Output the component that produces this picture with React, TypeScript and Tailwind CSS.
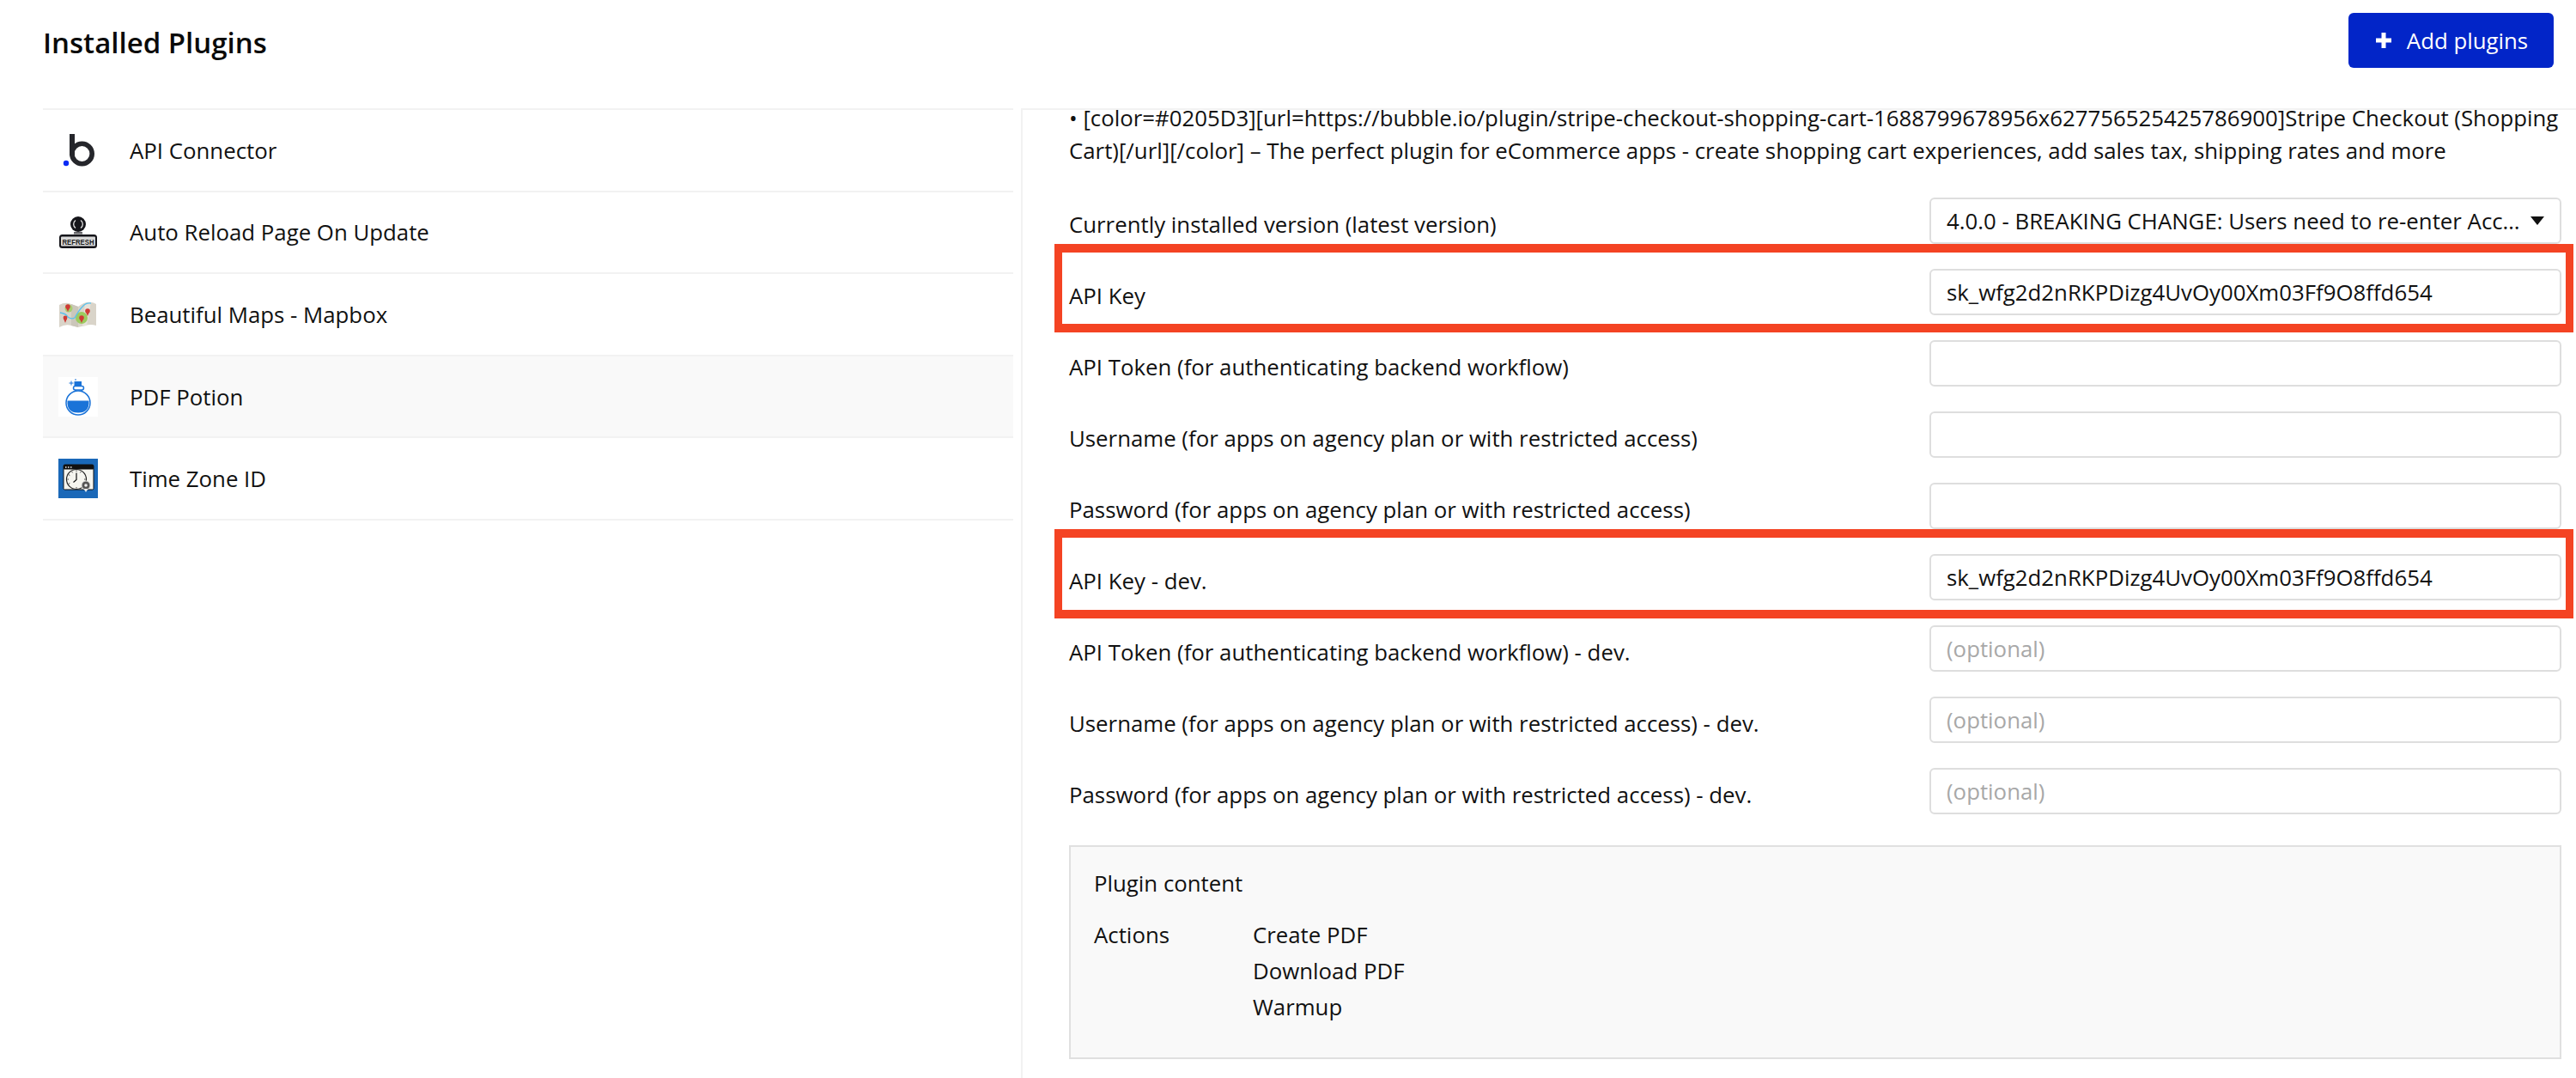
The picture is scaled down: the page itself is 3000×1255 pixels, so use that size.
import React from "react";

const font = { fontFamily: '"Open Sans", sans-serif' };

function BubbleIcon() {
  return (
    <svg viewBox="0 0 46 46" className="w-[46px] h-[46px]">
      <path d="M16 4 V29" stroke="#25262b" strokeWidth="6" fill="none" />
      <circle cx="27.5" cy="27" r="11.7" stroke="#25262b" strokeWidth="5.6" fill="none" />
      <circle cx="9" cy="38" r="3.2" fill="#0b2bf5" />
    </svg>
  );
}

function RefreshIcon() {
  return (
    <svg viewBox="0 0 46 46" className="w-[46px] h-[46px]">
      <circle cx="23" cy="14" r="9" fill="#15151a" />
      <path d="M20 9.5a5.5 5.5 0 0 0 0 9M26 9.5a5.5 5.5 0 0 1 0 9" stroke="#e5e5e5" strokeWidth="1.3" fill="none" />
      <rect x="18" y="23" width="10" height="2.5" fill="#66666a" />
      <rect x="1" y="26" width="44" height="16" rx="3.5" fill="#15151a" />
      <rect x="3" y="28.5" width="40" height="11" rx="1" fill="#d8d8d8" />
      <text x="23" y="37.5" textAnchor="middle" fontSize="9.5" fontWeight="700" fill="#1a1a1a" fontFamily="Liberation Sans, sans-serif" textLength="37" lengthAdjust="spacingAndGlyphs">REFRESH</text>
    </svg>
  );
}

function MapIcon() {
  return (
    <svg viewBox="0 0 46 46" className="w-[46px] h-[46px]">
      <path d="M1 12 Q8 8 15 11 L23 14 Q31 8 38 9 Q41 9 44 11 V36 Q38 34 31 36 L23 38 L15 36 Q8 34 1 38 Z" fill="#d9d4c9" />
      <path d="M15 11 L23 14 V38 L15 36 Z" fill="#cbc6ba" />
      <path d="M31 10 L38 9 L33 36 L28 37 Z" fill="#e6e2d9" />
      <circle cx="12" cy="16" r="4.5" fill="#a8cf6f" />
      <circle cx="27" cy="27" r="7" fill="#9ccb5f" />
      <path d="M2 21 Q9 22 11 26 Q15 29 19 27 Q24 18 28 14 Q32 9 38 10" stroke="#5cc0ec" strokeWidth="1.3" fill="none" />
      <circle cx="11" cy="14" r="2.8" fill="#cf3a35" />
      <path d="M9 15.5 L11 20 L13 15.5Z" fill="#cf3a35" />
      <circle cx="8" cy="27" r="2.4" fill="#cf3a35" />
      <path d="M6 28 L8 33 L10 28Z" fill="#cf3a35" />
      <circle cx="27" cy="27" r="2.8" fill="#cf3a35" />
      <path d="M25 28.5 L27 33 L29 28.5Z" fill="#cf3a35" />
      <circle cx="34" cy="19" r="2.8" fill="#cf3a35" />
      <path d="M32 20.5 L34 25 L36 20.5Z" fill="#cf3a35" />
    </svg>
  );
}

function PotionIcon() {
  return (
    <svg viewBox="0 0 46 46" className="w-[46px] h-[46px] bg-white">
      <rect x="18.5" y="5" width="8.5" height="5.5" fill="#1a73d8" />
      <rect x="17.5" y="10.5" width="12" height="4.5" rx="2.2" fill="none" stroke="#1a73d8" strokeWidth="1.5" />
      <circle cx="23" cy="30" r="14" fill="none" stroke="#1a73d8" strokeWidth="1.5" />
      <path d="M10.5 27.5 H35.5 Q36.5 41.5 23 41.5 Q9.5 41.5 10.5 27.5Z" fill="#1a73d8" />
      <path d="M15 4.5 v5 M12.5 7 h5 M19 3 h2" stroke="#1a73d8" strokeWidth="1" />
      <path d="M20 15v2M27 15v2" stroke="#1a73d8" strokeWidth="1.5" />
    </svg>
  );
}

function ClockIcon() {
  return (
    <svg viewBox="0 0 46 46" className="w-[46px] h-[46px]">
      <rect width="46" height="46" fill="#1a68b8" />
      <rect x="6" y="7" width="35" height="29" rx="1.5" fill="#f5f5ef" stroke="#111" strokeWidth="1" />
      <rect x="6" y="7" width="35" height="5.5" rx="1" fill="#111" />
      <path d="M8 10h1.5M11 10h1.5M14 10h1.5" stroke="#eee" strokeWidth="1.4" />
      <circle cx="21" cy="24" r="11.5" fill="#f5f5ef" stroke="#222" strokeWidth="1.2" />
      <path d="M21 16.5v8l-3.5 3" stroke="#111" strokeWidth="1.2" fill="none" />
      <path d="M21 13.5v1.5M21 33v1.5M10.5 24h1.5M30 24h1.5M15.7 15l.8 1.3M26.3 15l-.8 1.3M12 18.7l1.3.8M12 29.3l1.3-.8" stroke="#333" strokeWidth="0.9" />
      <circle cx="32" cy="31" r="5" fill="#555" stroke="#ddd" strokeWidth="1" />
      <circle cx="32" cy="31" r="1.8" fill="#eee" />
      <path d="M29.5 35 L32 39 L34.5 35Z" fill="#eee" />
    </svg>
  );
}

const plugins = [
  { name: "API Connector", icon: <BubbleIcon /> },
  { name: "Auto Reload Page On Update", icon: <RefreshIcon /> },
  { name: "Beautiful Maps - Mapbox", icon: <MapIcon /> },
  { name: "PDF Potion", icon: <PotionIcon />, active: true },
  { name: "Time Zone ID", icon: <ClockIcon /> },
];

const fields = [
  { label: "API Key", value: "sk_wfg2d2nRKPDizg4UvOy00Xm03Ff9O8ffd654" },
  { label: "API Token (for authenticating backend workflow)" },
  { label: "Username (for apps on agency plan or with restricted access)" },
  { label: "Password (for apps on agency plan or with restricted access)" },
  { label: "API Key - dev.", value: "sk_wfg2d2nRKPDizg4UvOy00Xm03Ff9O8ffd654" },
  { label: "API Token (for authenticating backend workflow) - dev.", placeholder: "(optional)" },
  { label: "Username (for apps on agency plan or with restricted access) - dev.", placeholder: "(optional)" },
  { label: "Password (for apps on agency plan or with restricted access) - dev.", placeholder: "(optional)" },
];

function Row({ label, children }: { label: string; children: React.ReactNode }) {
  return (
    <div className="flex items-center h-[54px] mb-[29px]">
      <div className="w-[1002px] shrink-0 pt-[8px]">{label}</div>
      <div className="w-[736px] h-[54px] shrink-0 border-2 border-[#dedede] rounded-[6px] bg-white flex items-center px-[18px]">
        {children}
      </div>
    </div>
  );
}

export default function App() {
  return (
    <div style={font} className="w-[3000px] h-[1255px] overflow-hidden bg-white text-[25.8px] leading-[38px] text-[#111]">
      <header className="h-[126px] flex items-start justify-between pl-[50px] pr-[26px]">
        <h1 className="text-[33px] font-semibold leading-[100px] text-[#0a0a0a]">Installed Plugins</h1>
        <button className="mt-[15px] w-[239px] h-[64px] rounded-[6px] bg-[#0225c8] text-white flex items-center justify-center gap-[16px]">
          <svg viewBox="0 0 22 22" className="w-[22px] h-[22px]">
            <path d="M11 2v18M2 11h18" stroke="#fff" strokeWidth="5" />
          </svg>
          <span>Add plugins</span>
        </button>
      </header>
      <div className="flex h-[1129px]">
        <aside className="w-[1191px] shrink-0 border-r-2 border-[#f2f2f2] pl-[50px] pr-[9px]">
          <ul className="border-t-2 border-[#f2f2f2]">
            {plugins.map((p) => (
              <li
                key={p.name}
                className={`h-[95.6px] border-b-2 border-[#f2f2f2] pl-[18px] flex items-center gap-[37px] ${p.active ? "bg-[#f9f9f9]" : ""}`}
              >
                <span className="w-[46px] h-[46px] shrink-0">{p.icon}</span>
                <span>{p.name}</span>
              </li>
            ))}
          </ul>
        </aside>
        <main className="relative flex-1 pl-[54px] border-t-2 border-[#f2f2f2]">
          <p className="w-[1745px] -mt-[10px] mb-[36px]">
            • [color=#0205D3][url=https://bubble.io/plugin/stripe-checkout-shopping-cart-1688799678956x627756525425786900]Stripe Checkout (Shopping Cart)[/url][/color] – The perfect plugin for eCommerce apps - create shopping cart experiences, add sales tax, shipping rates and more
          </p>
          <Row label="Currently installed version (latest version)">
            <span className="flex-1 truncate">4.0.0 - BREAKING CHANGE: Users need to re-enter Access Keys</span>
            <svg viewBox="0 0 16 10" className="w-[16px] h-[10px] ml-[6px] shrink-0">
              <path d="M0 0h16L8 10z" fill="#111" />
            </svg>
          </Row>
          {fields.map((f) => (
            <Row key={f.label} label={f.label}>
              {f.value ? <span>{f.value}</span> : <span className="text-[#a8a8a8]">{f.placeholder}</span>}
            </Row>
          ))}
          <section className="w-[1738px] h-[249px] mt-[36px] border-2 border-[#e0e0e0] bg-[#f9f9f9] pl-[27px] pt-[23px]">
            <div className="mb-[22px]">Plugin content</div>
            <div className="flex">
              <div className="w-[185px]">Actions</div>
              <div className="leading-[42px] -mt-[2px]">
                <div>Create PDF</div>
                <div>Download PDF</div>
                <div>Warmup</div>
              </div>
            </div>
          </section>
          <div className="absolute left-[37px] top-[156px] w-[1769px] h-[103px] border-y-[10px] border-x-[9px] border-[#f44323]" />
          <div className="absolute left-[37px] top-[488px] w-[1769px] h-[104px] border-y-[10px] border-x-[9px] border-[#f44323]" />
        </main>
      </div>
    </div>
  );
}
